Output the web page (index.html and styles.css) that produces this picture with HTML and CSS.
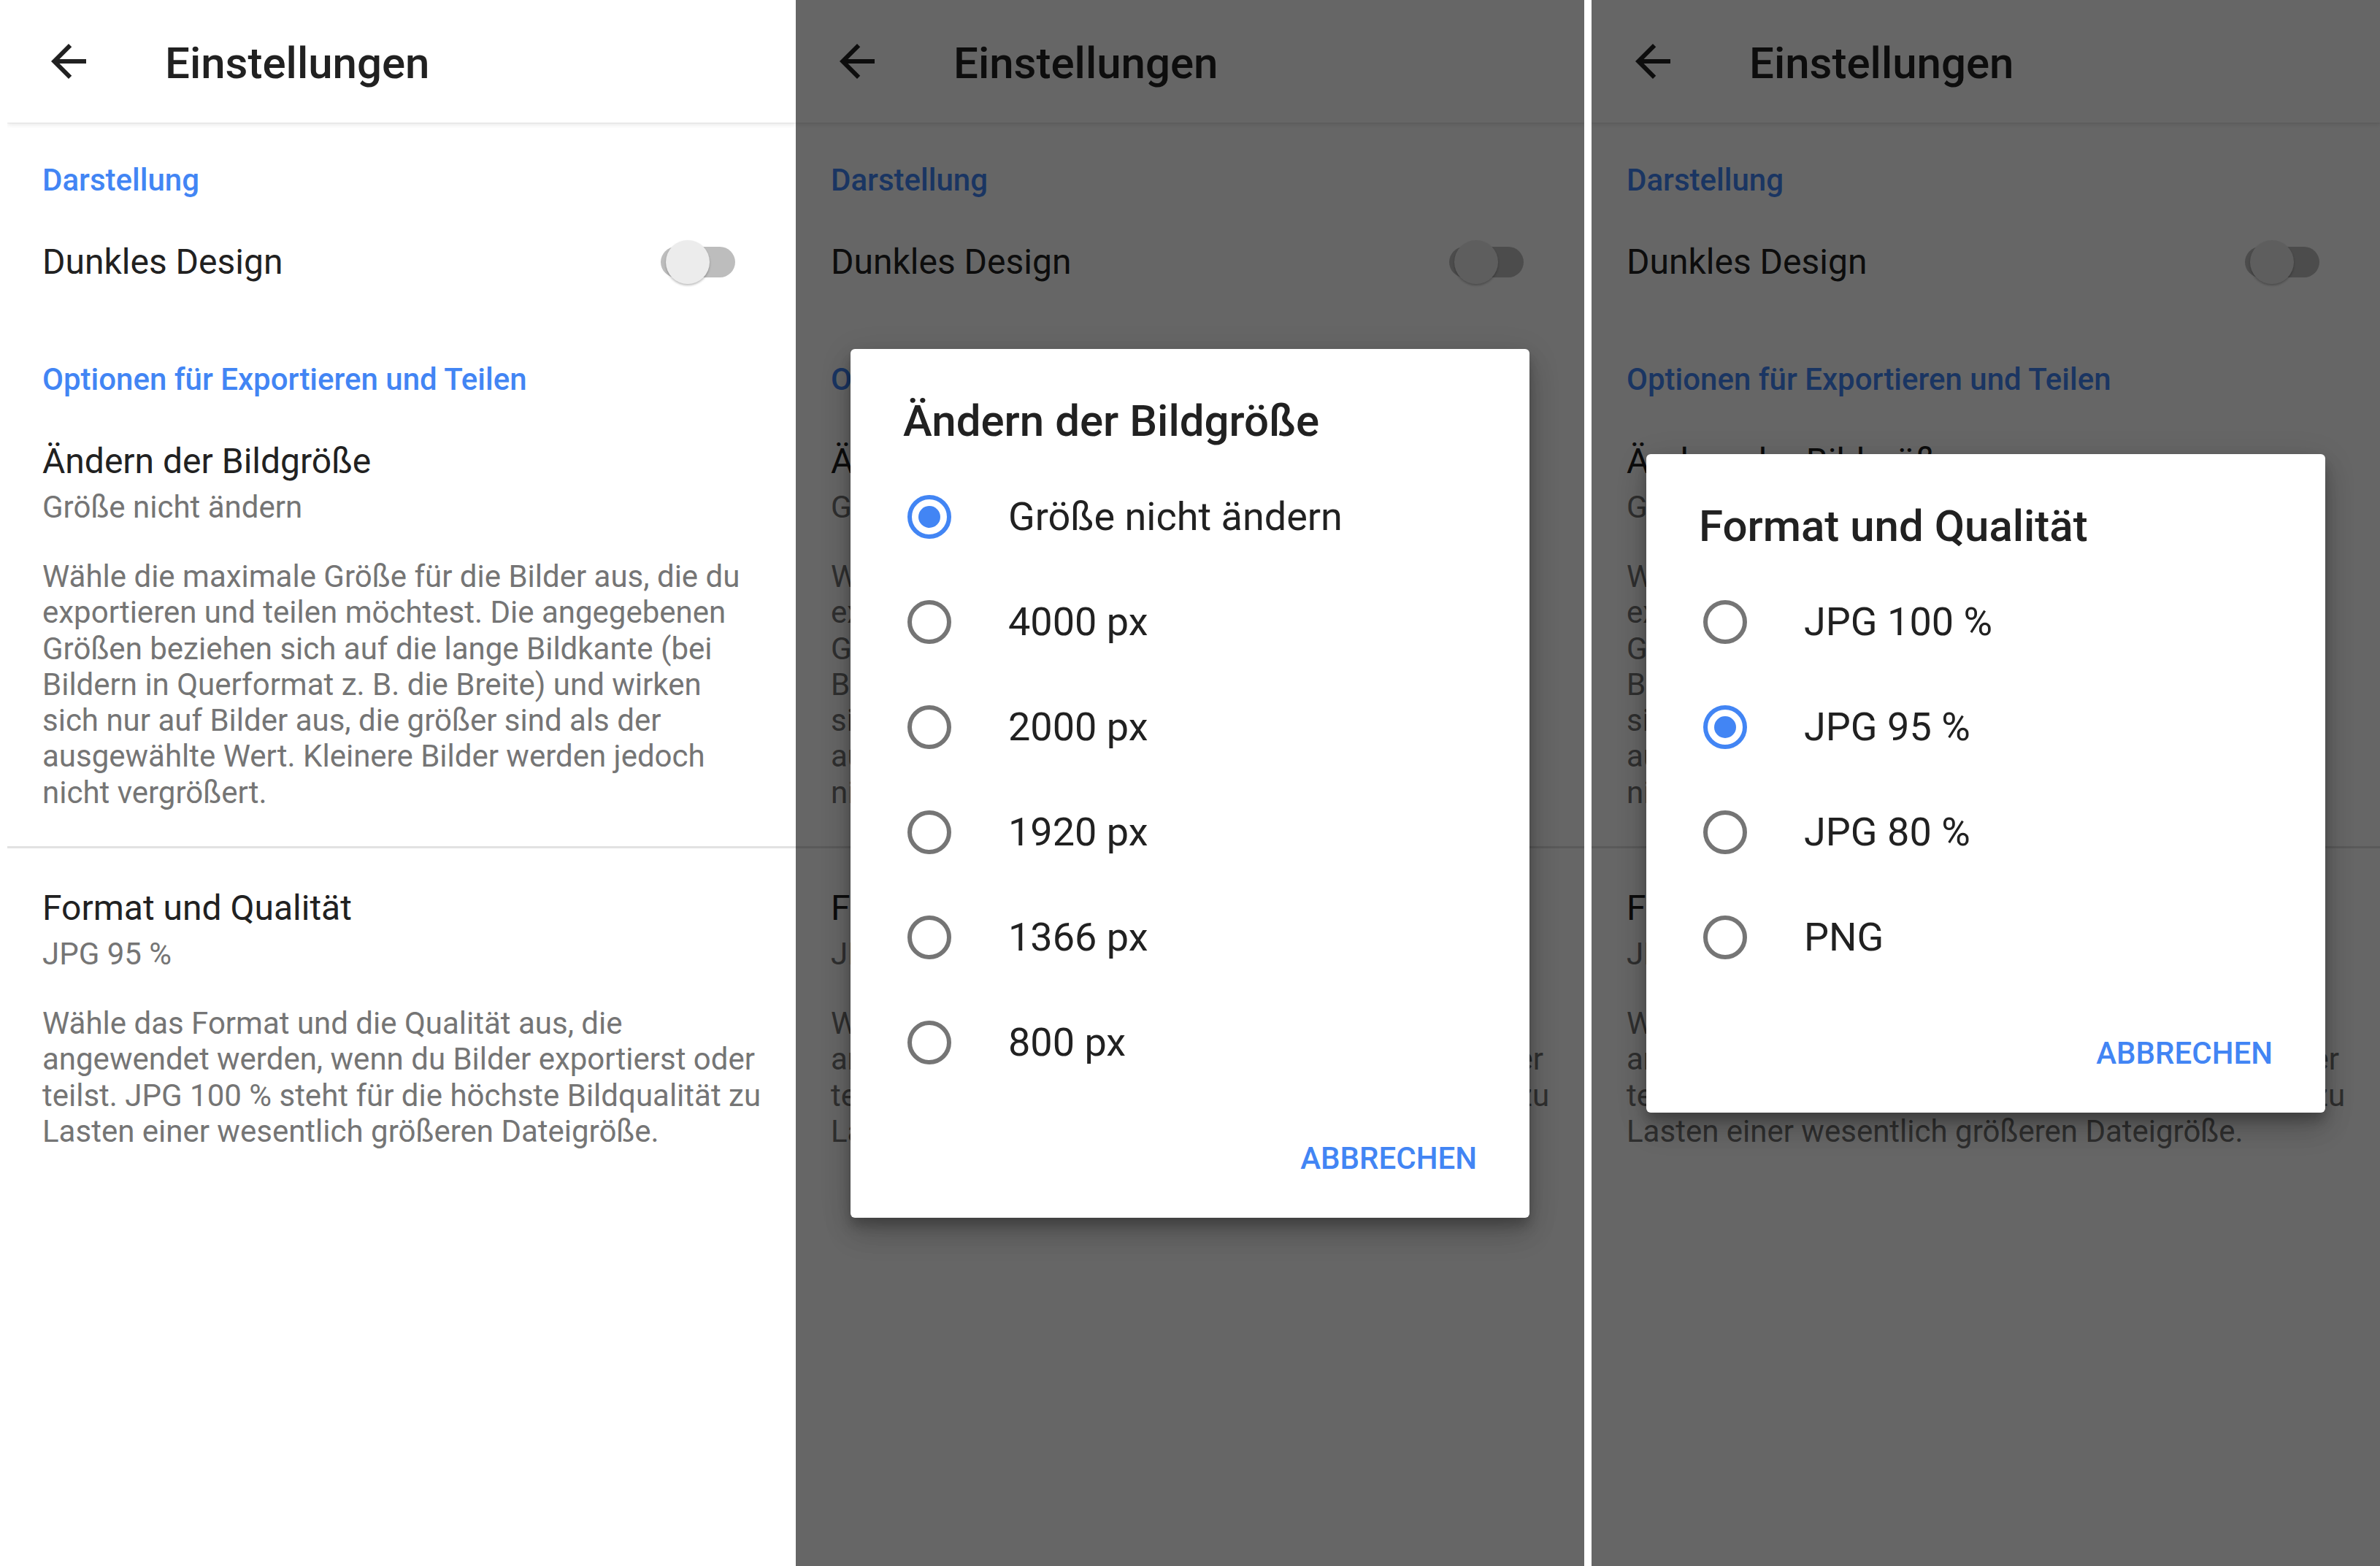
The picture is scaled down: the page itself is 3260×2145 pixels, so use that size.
FILE: index.html
```html
<!DOCTYPE html>
<html>

<head>
    <title>Einstellungen</title>
    <meta charset="utf-8">
    <link rel="stylesheet" href="styles.css">
</head>

<body>
    <div class="screens">

        <!-- Bildschirm 1: Einstellungen -->
        <section class="screen">
            <header class="toolbar">
                <svg class="back" viewBox="0 0 24 24"><path d="M20 11H7.83l5.59-5.59L12 4l-8 8 8 8 1.41-1.41L7.83 13H20v-2z"/></svg>
                <h1 class="toolbar-title">Einstellungen</h1>
            </header>
            <div class="prefs">
                <h2 class="category">Darstellung</h2>
                <div class="pref-switch">
                    <span class="pref-title">Dunkles Design</span>
                    <span class="switch"><span class="thumb"></span></span>
                </div>
                <h2 class="category">Optionen für Exportieren und Teilen</h2>
                <div class="pref">
                    <div class="pref-title">Ändern der Bildgröße</div>
                    <div class="pref-summary">Größe nicht ändern</div>
                    <p class="pref-desc">Wähle die maximale Größe für die Bilder aus, die du<br>exportieren und teilen möchtest. Die angegebenen<br>Größen beziehen sich auf die lange Bildkante (bei<br>Bildern in Querformat z. B. die Breite) und wirken<br>sich nur auf Bilder aus, die größer sind als der<br>ausgewählte Wert. Kleinere Bilder werden jedoch<br>nicht vergrößert.</p>
                </div>
                <div class="divider"></div>
                <div class="pref">
                    <div class="pref-title">Format und Qualität</div>
                    <div class="pref-summary">JPG 95 %</div>
                    <p class="pref-desc">Wähle das Format und die Qualität aus, die<br>angewendet werden, wenn du Bilder exportierst oder<br>teilst. JPG 100 % steht für die höchste Bildqualität zu<br>Lasten einer wesentlich größeren Dateigröße.</p>
                </div>
            </div>
        </section>

        <!-- Bildschirm 2: Dialog Bildgröße -->
        <section class="screen">
            <header class="toolbar">
                <svg class="back" viewBox="0 0 24 24"><path d="M20 11H7.83l5.59-5.59L12 4l-8 8 8 8 1.41-1.41L7.83 13H20v-2z"/></svg>
                <h1 class="toolbar-title">Einstellungen</h1>
            </header>
            <div class="prefs">
                <h2 class="category">Darstellung</h2>
                <div class="pref-switch">
                    <span class="pref-title">Dunkles Design</span>
                    <span class="switch"><span class="thumb"></span></span>
                </div>
                <h2 class="category">Optionen für Exportieren und Teilen</h2>
                <div class="pref">
                    <div class="pref-title">Ändern der Bildgröße</div>
                    <div class="pref-summary">Größe nicht ändern</div>
                    <p class="pref-desc">Wähle die maximale Größe für die Bilder aus, die du<br>exportieren und teilen möchtest. Die angegebenen<br>Größen beziehen sich auf die lange Bildkante (bei<br>Bildern in Querformat z. B. die Breite) und wirken<br>sich nur auf Bilder aus, die größer sind als der<br>ausgewählte Wert. Kleinere Bilder werden jedoch<br>nicht vergrößert.</p>
                </div>
                <div class="divider"></div>
                <div class="pref">
                    <div class="pref-title">Format und Qualität</div>
                    <div class="pref-summary">JPG 95 %</div>
                    <p class="pref-desc">Wähle das Format und die Qualität aus, die<br>angewendet werden, wenn du Bilder exportierst oder<br>teilst. JPG 100 % steht für die höchste Bildqualität zu<br>Lasten einer wesentlich größeren Dateigröße.</p>
                </div>
            </div>
            <div class="scrim">
                <div class="dialog">
                    <h3 class="dialog-title">Ändern der Bildgröße</h3>
                    <div class="option"><span class="radio checked"></span><span class="option-text">Größe nicht ändern</span></div>
                    <div class="option"><span class="radio"></span><span class="option-text">4000 px</span></div>
                    <div class="option"><span class="radio"></span><span class="option-text">2000 px</span></div>
                    <div class="option"><span class="radio"></span><span class="option-text">1920 px</span></div>
                    <div class="option"><span class="radio"></span><span class="option-text">1366 px</span></div>
                    <div class="option"><span class="radio"></span><span class="option-text">800 px</span></div>
                    <div class="dialog-actions"><span class="btn-text">ABBRECHEN</span></div>
                </div>
            </div>
        </section>

        <!-- Bildschirm 3: Dialog Format -->
        <section class="screen screen-apart">
            <header class="toolbar">
                <svg class="back" viewBox="0 0 24 24"><path d="M20 11H7.83l5.59-5.59L12 4l-8 8 8 8 1.41-1.41L7.83 13H20v-2z"/></svg>
                <h1 class="toolbar-title">Einstellungen</h1>
            </header>
            <div class="prefs">
                <h2 class="category">Darstellung</h2>
                <div class="pref-switch">
                    <span class="pref-title">Dunkles Design</span>
                    <span class="switch"><span class="thumb"></span></span>
                </div>
                <h2 class="category">Optionen für Exportieren und Teilen</h2>
                <div class="pref">
                    <div class="pref-title">Ändern der Bildgröße</div>
                    <div class="pref-summary">Größe nicht ändern</div>
                    <p class="pref-desc">Wähle die maximale Größe für die Bilder aus, die du<br>exportieren und teilen möchtest. Die angegebenen<br>Größen beziehen sich auf die lange Bildkante (bei<br>Bildern in Querformat z. B. die Breite) und wirken<br>sich nur auf Bilder aus, die größer sind als der<br>ausgewählte Wert. Kleinere Bilder werden jedoch<br>nicht vergrößert.</p>
                </div>
                <div class="divider"></div>
                <div class="pref">
                    <div class="pref-title">Format und Qualität</div>
                    <div class="pref-summary">JPG 95 %</div>
                    <p class="pref-desc">Wähle das Format und die Qualität aus, die<br>angewendet werden, wenn du Bilder exportierst oder<br>teilst. JPG 100 % steht für die höchste Bildqualität zu<br>Lasten einer wesentlich größeren Dateigröße.</p>
                </div>
            </div>
            <div class="scrim">
                <div class="dialog">
                    <h3 class="dialog-title">Format und Qualität</h3>
                    <div class="option"><span class="radio"></span><span class="option-text">JPG 100 %</span></div>
                    <div class="option"><span class="radio checked"></span><span class="option-text">JPG 95 %</span></div>
                    <div class="option"><span class="radio"></span><span class="option-text">JPG 80 %</span></div>
                    <div class="option"><span class="radio"></span><span class="option-text">PNG</span></div>
                    <div class="dialog-actions"><span class="btn-text">ABBRECHEN</span></div>
                </div>
            </div>
        </section>

    </div>
</body>

</html>
```

FILE: styles.css
```css
body {
    margin: 0;
    background-color: #ffffff;
    font-family: Roboto, "Liberation Sans", sans-serif;
    color: #212121;
}

.screens {
    display: flex;
    height: 2145px;
    padding-left: 10px;
    overflow: hidden;
}

.screen {
    position: relative;
    flex: 0 0 1080px;
    height: 2145px;
    background-color: #ffffff;
    overflow: hidden;
}

.screen-apart {
    margin-left: 10px;
}

/* Kopfzeile */

.toolbar {
    display: flex;
    align-items: center;
    height: 168px;
    box-shadow: 0 1px 0 rgba(0, 0, 0, 0.05), 0 3px 6px rgba(0, 0, 0, 0.09);
}

.back {
    width: 72px;
    height: 72px;
    margin-left: 48px;
    fill: #212121;
}

.toolbar-title {
    margin: 5px 0 0 96px;
    font-size: 60px;
    line-height: 72px;
    font-weight: 500;
}

/* Einstellungen */

.prefs {
    padding-left: 48px;
}

.category {
    margin: 0;
    padding-top: 49px;
    font-size: 42px;
    line-height: 60px;
    font-weight: 500;
    color: #4285f4;
}

.pref-switch {
    display: flex;
    align-items: center;
    justify-content: space-between;
    height: 164px;
    padding-right: 83px;
}

.pref-title {
    font-size: 48px;
    line-height: 60px;
}

.switch {
    position: relative;
    width: 102px;
    height: 42px;
    border-radius: 21px;
    background-color: #bdbdbd;
}

.thumb {
    position: absolute;
    left: 7px;
    top: -9px;
    width: 60px;
    height: 60px;
    border-radius: 50%;
    background-color: #ececec;
    box-shadow: 0 2px 3px rgba(0, 0, 0, 0.25);
}

.pref {
    padding: 52px 0 49px 0;
}

.pref-summary {
    margin-top: 3px;
    font-size: 42px;
    line-height: 60px;
    color: #757575;
}

.pref-desc {
    margin: 40px 0 0 0;
    font-size: 42px;
    line-height: 49.3px;
    color: #757575;
    white-space: nowrap;
}

.divider {
    height: 3px;
    margin-left: -48px;
    background-color: #e2e2e2;
}

/* Dialoge */

.scrim {
    position: absolute;
    top: 0;
    left: 0;
    right: 0;
    bottom: 0;
    display: flex;
    align-items: center;
    justify-content: center;
    background-color: rgba(0, 0, 0, 0.6);
}

.dialog {
    width: 930px;
    background-color: #ffffff;
    border-radius: 6px;
    box-shadow: 0 24px 38px rgba(0, 0, 0, 0.14), 0 9px 46px rgba(0, 0, 0, 0.12), 0 11px 15px rgba(0, 0, 0, 0.2);
}

.dialog-title {
    margin: 0;
    padding: 63px 72px 23px 72px;
    font-size: 60px;
    line-height: 72px;
    font-weight: 500;
}

.option {
    display: flex;
    align-items: center;
    height: 144px;
    padding-left: 78px;
}

.radio {
    display: flex;
    align-items: center;
    justify-content: center;
    box-sizing: border-box;
    width: 60px;
    height: 60px;
    border: 6px solid #757575;
    border-radius: 50%;
}

.radio.checked {
    border-color: #4285f4;
}

.radio.checked::after {
    content: "";
    width: 30px;
    height: 30px;
    border-radius: 50%;
    background-color: #4285f4;
}

.option-text {
    margin-left: 78px;
    font-size: 54px;
    line-height: 64px;
}

.dialog-actions {
    display: flex;
    justify-content: flex-end;
    padding: 33px 72px 27px 0;
}

.btn-text {
    font-size: 42px;
    line-height: 108px;
    font-weight: 500;
    color: #4285f4;
}
```
